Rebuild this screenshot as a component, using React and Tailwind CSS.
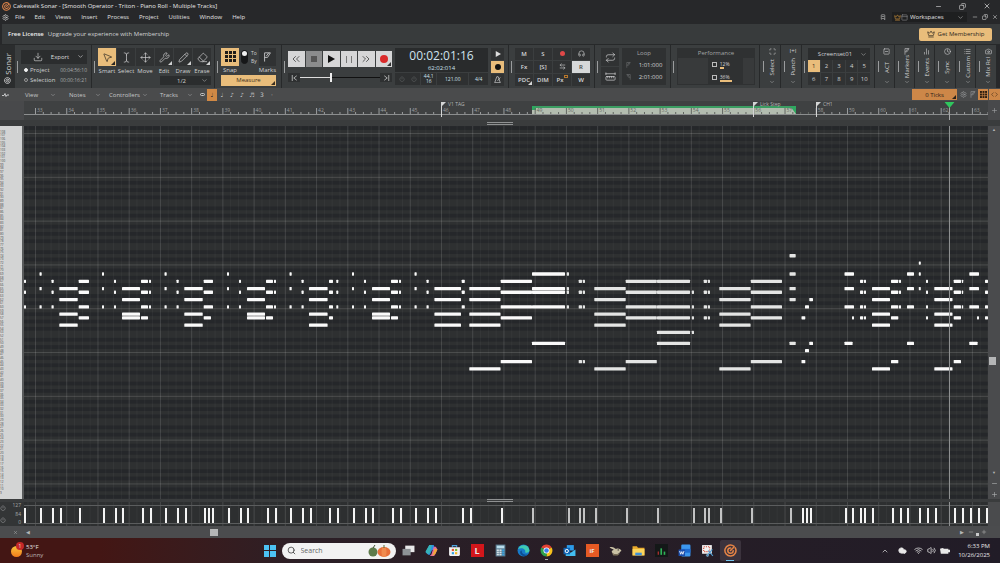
import React from 'react';
import {
  ArrowLeftRight, BookmarkMinus, Camera, ChartNoAxesColumn, ChevronDown, ChevronUp, ChevronsLeft, ChevronsRight, Clock, Cloud, Code,
  Copy, Crown, Download, Eraser, Headphones, List, Minus, MousePointer2, Move, PanelTop, Pencil, Plus, Power,
  Repeat, RulerDimensionLine, Scan, Search, Settings, SquareMinus, TextCursor, Volume2, Wifi, Wrench, X
} from 'lucide-react';

const MENUS = ['File', 'Edit', 'Views', 'Insert', 'Process', 'Project', 'Utilities', 'Window', 'Help'];

// y centre of each used row, keyed by midi note
const ROW = 3.65;
const START = 24;
const SPAN = 964;
const rowY = (midi) => 224.7 - (midi - 48) * ROW;
const pct = (x) => `${((x - START) / SPAN) * 100}%`;
const wide = (w) => `${(w / SPAN) * 100}%`;

const HIGH = [67, 64, 60];
const HIT = [69, 65, 60];
const CHORD = [65, 62, 58, 55];
const CHORD_ALT = [65, 62, 58, 57];
const CHORD_TOP = [67, 64, 60, 57];

// [start, end, notes]
const NOTES = [
  [24, 26, HIGH], [39.5, 41.7, HIT], [51.5, 53.7, HIGH], [59.3, 77.7, CHORD], [78.7, 89, CHORD_TOP],
  [102, 104, HIT], [114, 116, HIGH], [122, 140, CHORD_ALT], [141, 148, CHORD_TOP], [149, 151, HIGH],
  [164.5, 166.7, HIT], [176.5, 178.7, HIGH], [184.3, 202.7, CHORD], [203.7, 213, HIGH], [203.7, 211, [57]],
  [227, 229, HIT], [239, 241, HIGH], [247, 265, CHORD_ALT], [266, 273, CHORD_TOP], [274, 276, HIGH],
  [289.5, 291.7, HIT], [301.5, 303.7, HIGH], [309, 327.6, CHORD], [329, 333, CHORD_TOP], [336.3, 338.3, HIGH],
  [352, 354, HIT], [364, 366, HIGH], [372, 390, CHORD_ALT], [391, 398, CHORD_TOP], [399, 401, HIGH],
  [414.5, 416.7, HIT], [426.5, 428.7, HIGH], [434.4, 461, CHORD], [461.7, 464.8, HIGH],
  [469.3, 500.5, [...CHORD, 43]],
  [500.7, 532, [...CHORD_TOP, 45]],
  [532, 565, [69, 65, 64, 60, 50]], [566.8, 569, [69, 65, 64, 60]],
  [578.7, 582, [...HIGH, 45]], [582.8, 585, [...HIGH, 45]],
  [594.3, 625.7, [...CHORD, 43]],
  [625.7, 656.8, [...CHORD_TOP, 45]],
  [657, 690, [...CHORD_TOP, 53, 50]], [691.8, 694, [64, 60, 57, 53]],
  [703.7, 707, CHORD_TOP], [707.8, 710, CHORD_TOP],
  [719.3, 750.6, [...CHORD, 43]],
  [750.8, 782, [...CHORD_TOP, 45]],
  [789.5, 795.7, [74, 69, 65, 62, 50]],
  [801.5, 805.3, [57, 45]], [805, 809, [60, 48]], [809.3, 813, [62, 50]],
  [844.5, 854, HIT], [844.5, 852.6, [50]], [852, 854, [57]],
  [860, 863.2, CHORD_TOP], [864, 866, CHORD_TOP],
  [872, 890, [...CHORD, 43]], [891, 898.3, [...CHORD_TOP, 45]], [899, 901, HIGH],
  [907, 914, [...HIT, 50]], [918.8, 920.8, [72, 69, 65]], [926, 928, CHORD_TOP],
  [934.3, 952.5, [...CHORD, 43]], [953.7, 961, [...CHORD_TOP, 45]], [961.8, 963.2, HIGH],
  [969.3, 979, HIT], [969.3, 977.6, [50]], [977, 979, [57]],
  [985, 988, CHORD_TOP]
];

const VELOCITIES = [
  25, 41, 53, 61, 80, 104, 116, 123, 143, 151, 166, 178, 186, 205, 209, 213, 229, 241, 248, 268, 276, 291, 303, 311, 330, 338,
  354, 366, 373, 393, 401, 416, 428, 436, 463, 471, 502, 533, 569, 580, 584, 596, 627, 658, 694, 705, 709, 721, 752, 791, 803, 807,
  811, 846, 853, 861, 865, 873, 893, 901, 908, 920, 928, 936, 955, 963, 971, 979, 987
];

const MEASURES = Array.from({ length: 31 }, (_, i) => 33 + i);
const measureX = (n) => 35 + (n - 33) * 31.23;
const PLAYHEAD = 949.5;

const KEYS = Array.from({ length: 104 }, (_, i) => 110 - i);
const LABELLED_KEYS = KEYS.filter((k) => k <= 108 && k >= 9);
const isBlack = (midi) => [1, 3, 6, 8, 10].includes(midi % 12);

const Grip = () => <span className="w-px h-3 shrink-0 bg-[#9a9c9d]" />;

const Module = ({ className = '', children }) => (
  <section className={`flex items-center gap-[3px] pl-[2px] pr-1 bg-[#3b3e3f] border-r border-[#27292a] ${className}`}>
    <Grip />
    {children}
  </section>
);

const Picker = ({ label, value, className = '' }) => (
  <label className={`relative flex items-center bg-[#2b2d2e] ${className}`}>
    <select aria-label={label} className="w-full appearance-none bg-transparent outline-none pl-1 pr-3 [text-align-last:center]">
      <option>{value}</option>
    </select>
    <ChevronDown size={7} strokeWidth={1.5} className="absolute right-[3px] pointer-events-none" />
  </label>
);

const SonarLogo = ({ className }) => (
  <svg viewBox="0 0 24 24" className={className} fill="none" stroke="currentColor" strokeWidth="2.8" strokeLinecap="round">
    <path d="M18.500 4.200A10.200 10.200 0 1 0 20.800 7" />
    <path d="M12 12 18.500 5.500M12 7.200A5 5 0 1 0 17 12.500" />
  </svg>
);

const Flag = ({ className }) => (
  <svg viewBox="0 0 10 12" className={className} fill="none" stroke="currentColor">
    <path d="M1.5 11.500V1H8.500L5 6.500H1.500M3.500 5L6.500 1" />
  </svg>
);

const GridIcon = ({ className }) => (
  <svg viewBox="0 0 11 11" className={className} fill="currentColor">
    {[0, 1, 2].map((r) => [0, 1, 2].map((c) => <rect key={`${r}${c}`} x={c * 4} y={r * 4} width="3" height="3" />))}
  </svg>
);

const Corner = () => (
  <i className="absolute right-px bottom-px border-l-2 border-t-2 border-t-transparent border-l-transparent border-r-2 border-b-2 border-r-current border-b-current" />
);

const TitleBar = () => (
  <header className="flex items-center h-3 px-[2px] gap-[2px] text-[#e6e6e6]">
    <SonarLogo className="w-[9px] h-[9px] text-[#d9824a]" />
    <h1 className="flex-1">Cakewalk Sonar - [Smooth Operator - Triton - Piano Roll - Multiple Tracks]</h1>
    <div className="flex items-center gap-[17px] pr-[7px]">
      <button aria-label="Minimize"><Minus size={7} /></button>
      <button aria-label="Restore"><Copy size={7} className="-scale-x-100" /></button>
      <button aria-label="Close"><X size={8} /></button>
    </div>
  </header>
);

const MenuBar = () => (
  <div className="flex items-center h-3 pb-[2px] px-[2px] text-[#e0e0e0]">
    <Settings size={7} />
    <nav className="flex flex-1 gap-[10px] pl-[6px]">
      {MENUS.map((m) => <button key={m}>{m}</button>)}
    </nav>
    <BookmarkMinus size={6} className="mr-[6px]" />
    <div className="flex items-center w-[75px] h-[10px] pl-[2px] bg-[#1e1f20]">
      <Crown size={7} className="text-[#d99a3c]" />
      <PanelTop size={7} className="text-[#8a8c8d]" />
      <Picker label="Workspaces" value="Workspaces" className="flex-1 bg-transparent [&_select]:[text-align-last:left]! [&_select]:pl-[2px]!" />
    </div>
    <div className="flex items-center gap-1 pl-[5px]">
      <button aria-label="Minimize view"><Minus size={6} /></button>
      <button aria-label="Restore view"><Copy size={6} className="-scale-x-100" /></button>
      <button aria-label="Close view"><X size={6} /></button>
    </div>
  </div>
);

const MembershipBar = () => (
  <div className="flex items-center h-5 ml-[2px] pl-[6px] pr-2 bg-[#383b3c] text-[#d2d3d4]">
    <strong className="font-semibold text-[#f0f0f0] mr-1">Free License</strong>
    <span className="flex-1">Upgrade your experience with Membership</span>
    <button className="flex items-center justify-center gap-[3px] w-[73px] h-[13px] rounded-[2px] bg-[#e9bd7b] text-[#2c2620]">
      <Crown size={8} />Get Membership
    </button>
  </div>
);

const TOOLS = [
  { label: 'Smart', icon: MousePointer2, on: true },
  { label: 'Select', icon: TextCursor },
  { label: 'Move', icon: Move },
  { label: 'Edit', icon: Wrench },
  { label: 'Draw', icon: Pencil },
  { label: 'Erase', icon: Eraser }
];

const Tool = ({ tool }) => {
  const Icon = tool.icon;
  return (
    <button className="flex flex-col items-center gap-px w-[18px]">
      <span className={`relative flex items-center justify-center w-full h-[18px] ${tool.on ? 'bg-[#e9bd7b] text-[#2a2622]' : 'bg-[#303233] text-[#d0d1d2]'}`}>
        <Icon size={11} strokeWidth={1.5} />
        {tool.label !== 'Select' && tool.label !== 'Move' && <Corner />}
      </span>
      {tool.label}
    </button>
  );
};

const ExportModule = () => (
  <Module className="w-[77px]">
    <div className="flex flex-col flex-1 gap-[3px]">
      <button className="flex items-center justify-between h-[14px] pl-3 pr-[3px] bg-[#2b2d2e] text-[#dcdcdc]">
        <Download size={10} strokeWidth={1.5} />Export<ChevronDown size={7} />
      </button>
      {[['Project', '00:04:56:10'], ['Selection', '00:00:16:21']].map(([name, time], i) => (
        <label key={name} className="flex items-center gap-[2px] h-[7px] ml-[3px]">
          <input type="radio" name="range" defaultChecked={i === 0} className="appearance-none w-1 h-1 rounded-full border border-[#999] checked:border-[#eee] checked:bg-[#eee]" />
          <span className="flex-1">{name}</span>
          <span className="text-[5px] text-[#a8aaab]">{time}</span>
        </label>
      ))}
    </div>
  </Module>
);

const ToolsModule = () => (
  <Module className="w-[123px]">
    <div className="flex flex-col">
      <div className="flex gap-px">{TOOLS.map((t) => <Tool key={t.label} tool={t} />)}</div>
      <Picker label="Note duration" value="1/2" className="self-end w-[51px] h-[9px] mt-px" />
    </div>
  </Module>
);

const SnapModule = () => (
  <Module className="w-[67px]">
    <div className="flex flex-col gap-px">
      <div className="flex justify-between w-[55px]">
        <button className="flex flex-col items-center">
          <span className="flex items-center justify-center w-[18px] h-[18px] bg-[#e9bd7b] text-[#1f1c18]">
            <GridIcon className="w-[11px] h-[11px]" />
          </span>
          Snap
        </button>
        <div className="flex items-center gap-[3px] h-[18px]">
          <input type="checkbox" role="switch" aria-label="Snap to or by" className="appearance-none w-[7px] h-[14px] rounded-full bg-[#161718] border border-[#161718] before:block before:w-[5px] before:h-[5px] before:rounded-full before:bg-[#eee]" />
          <span className="flex flex-col text-[5px] leading-[8px]"><span>To</span><span>By</span></span>
        </div>
        <button className="flex flex-col items-center">
          <span className="flex items-center justify-center w-[17px] h-[18px] bg-[#303233]">
            <Flag className="w-[9px] h-[10px]" />
          </span>
          Marks
        </button>
      </div>
      <button className="relative h-[11px] bg-[#e9bd7b] text-[#3b2f20]">Measure<Corner /></button>
    </div>
  </Module>
);

const TRANSPORT = [
  { name: 'Rewind', art: <ChevronsLeft size={12} strokeWidth={1.5} /> },
  { name: 'Stop', art: <i className="w-[6px] h-[6px] bg-[#555]" />, dim: true },
  { name: 'Play', art: <svg viewBox="0 0 8 8" className="w-2 h-2"><path d="M1 0 8 4 1 8z" /></svg> },
  { name: 'Pause', art: <i className="w-[6px] h-[7px] border-x border-[#777]" /> },
  { name: 'Fast forward', art: <ChevronsRight size={12} strokeWidth={1.5} /> },
  { name: 'Record', art: <i className="w-2 h-2 rounded-full bg-[#da2a2a]" /> }
];

const EndStop = ({ flip }) => (
  <button aria-label={flip ? 'Go to end' : 'Go to start'} className="flex items-center justify-center w-3 h-[9px] bg-[#2e3031]">
    <svg viewBox="0 0 8 8" className={`w-[7px] h-[6px] ${flip ? 'rotate-180' : ''}`} fill="none" stroke="currentColor"><path d="M1 0v8M7 1 3 4l4 3" /></svg>
  </button>
);

const TransportModule = () => (
  <Module className="w-[227px]">
    <div className="flex flex-col gap-[6px] w-[104px]">
      <div className="grid grid-cols-6 gap-px">
        {TRANSPORT.map((b) => (
          <button key={b.name} aria-label={b.name} className={`relative flex items-center justify-center h-4 ${b.dim ? 'bg-[#8b8c8d]' : 'bg-[#d6d6d7]'} text-[#333] fill-[#111]`}>
            {b.art}{b.name === 'Record' && <Corner />}
          </button>
        ))}
      </div>
      <div className="flex items-center">
        <EndStop />
        <input
          type="range" aria-label="Position" defaultValue={39}
          className="flex-1 min-w-0 h-[9px] appearance-none bg-linear-to-r from-[#ddd] from-40% to-[#111] to-40% bg-size-[100%_1px] bg-no-repeat bg-center [&::-webkit-slider-thumb]:appearance-none [&::-webkit-slider-thumb]:w-[2px] [&::-webkit-slider-thumb]:h-[9px] [&::-webkit-slider-thumb]:bg-[#eee]"
        />
        <EndStop flip />
      </div>
    </div>
    <div className="flex flex-col flex-1 gap-px text-center text-[#cfe2ee]">
      <div className="flex flex-col justify-center h-6 bg-[#292b2c]">
        <output className="text-[12px] leading-[16px]">00:02:01:16</output>
        <output className="leading-[8px]">62:02:014</output>
      </div>
      <div className="flex gap-px h-3 text-[5px] *:flex *:items-center *:justify-center *:bg-[#2e3031]">
        <div className="flex-[26] gap-[6px] text-[#66696a]"><Power size={6} /><Power size={6} /></div>
        <div className="flex-[15] leading-[5px]">44.1<br />16</div>
        <div className="flex-[32]">121.00</div>
        <div className="flex-[19]">4/4</div>
      </div>
    </div>
    <div className="flex flex-col gap-px">
      <button aria-label="Audition" className="flex items-center justify-center w-[13px] h-3 bg-[#303233]">
        <svg viewBox="0 0 8 8" className="w-[6px] h-[6px] fill-[#ddd]"><path d="M1 0 8 4 1 8z" /></svg>
      </button>
      <button aria-label="Input echo" className="flex items-center justify-center w-[13px] h-3 bg-[#e9bd7b]"><i className="w-[6px] h-[6px] rounded-full bg-[#111]" /></button>
      <button aria-label="Metronome" className="flex items-center justify-center w-[13px] h-3 bg-[#303233]">
        <svg viewBox="0 0 10 10" className="w-[7px] h-[7px]" fill="none" stroke="currentColor"><path d="M1 9.500 4 1h2l3 8.500zM5 7l4-5" /></svg>
      </button>
    </div>
  </Module>
);

const MIX = [
  { name: 'Mute', art: 'M' },
  { name: 'Solo', art: 'S' },
  { name: 'Arm', art: <i className="w-[5px] h-[5px] rounded-full bg-[#e04848]" /> },
  { name: 'Listen', art: <Headphones size={7} /> },
  { name: 'Bypass effects', art: 'Fx' },
  { name: 'Dim solo', art: '[S]' },
  { name: 'Automation', art: <ArrowLeftRight size={7} /> },
  { name: 'Read', art: 'R', on: true },
  { name: 'Delay compensation', art: 'PDC' },
  { name: 'Dim', art: 'DIM' },
  { name: 'ProChannel', art: <>Px<i className="self-start w-1 h-[3px] mt-px border border-[#b9782c]" /></> },
  { name: 'Write', art: 'W' }
];

const MixModule = () => (
  <Module className="w-[86px]">
    <div className="grid grid-cols-4 gap-px flex-1">
      {MIX.map((b) => (
        <button key={b.name} aria-label={b.name} className={`relative flex items-center justify-center h-3 font-semibold ${b.on ? 'bg-[#d6d8d9] text-[#444]' : 'bg-[#303233] text-[#d6d7d8]'}`}>
          {b.art}{b.art === 'PDC' && <Corner />}
        </button>
      ))}
    </div>
  </Module>
);

const LoopModule = () => (
  <Module className="w-[76px]">
    <div className="flex flex-col gap-px">
      <button aria-label="Loop" className="flex items-center justify-center w-[18px] h-[18px] bg-[#303233]"><Repeat size={11} strokeWidth={1.5} /></button>
      <button aria-label="Set loop points" className="flex items-center justify-center w-[18px] h-[18px] bg-[#303233]"><RulerDimensionLine size={11} strokeWidth={1.5} /></button>
    </div>
    <div className="flex flex-col items-center flex-1 h-[37px] gap-1 pt-px bg-[#2f3132]">
      <span className="text-[#a3a5a6]">Loop</span>
      <span className="flex items-center gap-2 leading-[8px]"><Flag className="w-[5px] h-[6px] text-[#77797a]" />1:01:000</span>
      <span className="flex items-center gap-2 leading-[8px]"><Flag className="w-[5px] h-[6px] text-[#77797a] -scale-x-100" />2:01:000</span>
    </div>
  </Module>
);

const PerformanceModule = () => (
  <Module className="flex-1">
    <div className="flex flex-col flex-1 h-[37px] px-px bg-[#2f3132]">
      <span className="text-center text-[#a3a5a6] leading-[10px]">Performance</span>
      <div className="flex flex-1 gap-1 mb-px">
        <div className="flex-[28] bg-[#383a3b]" />
        <div className="flex flex-col justify-around flex-[26] text-[5px] leading-[6px]">
          {[[12, 'w-1'], [36, 'w-3']].map(([load, bar]) => (
            <div key={load} className="flex items-center gap-[3px]">
              <i className="w-[5px] h-[5px] border border-[#bbb]" />
              <span>{load}%<i className={`block h-[2px] bg-[#e9bd7b] ${bar}`} /></span>
            </div>
          ))}
        </div>
        <div className="flex-[10] bg-[#383a3b]" />
      </div>
    </div>
  </Module>
);

const SideModule = ({ label, children, className = 'w-[20px]' }) => (
  <button className={`relative flex flex-col items-center justify-between py-[3px] pl-1 bg-[#3b3e3f] border-r border-[#27292a] ${className}`}>
    <i className="absolute left-[3px] top-4 w-px h-[11px] bg-[#9a9c9d]" />
    {children}
    <span className="[writing-mode:vertical-rl] rotate-180">{label}</span>
    <ChevronDown size={6} strokeWidth={1.5} />
  </button>
);

const ScreensetModule = () => (
  <Module className="w-[73px]">
    <div className="flex flex-col flex-1">
      <Picker label="Screenset" value="Screenset01" className="h-3" />
      <div className="grid grid-cols-5 gap-px">
        {Array.from({ length: 10 }, (_, i) => (
          <button key={i} className={`h-3 ${i === 0 ? 'bg-[#e9bd7b] text-[#332a1d]' : 'bg-[#303233]'}`}>{i + 1}</button>
        ))}
      </div>
    </div>
  </Module>
);

const Toolbar = () => (
  <div className="flex h-11 border-t border-[#27292a] text-[#d0d1d2]">
    <div className="flex flex-col items-center justify-end gap-[2px] w-[15px] pb-1 bg-[#2b2d2e]">
      <span className="[writing-mode:vertical-rl] rotate-180 text-[8px] leading-[10px]">Sonar</span>
      <SonarLogo className="w-[7px] h-[7px]" />
    </div>
    <ExportModule />
    <ToolsModule />
    <SnapModule />
    <TransportModule />
    <MixModule />
    <LoopModule />
    <PerformanceModule />
    <SideModule label="Select" className="w-[21px]"><Scan size={7} /></SideModule>
    <SideModule label="Punch" className="w-[21px]"><span className="leading-[7px]">I+I</span></SideModule>
    <ScreensetModule />
    <SideModule label="ACT"><SquareMinus size={7} /></SideModule>
    <SideModule label="Markers"><Flag className="w-[6px] h-[7px]" /></SideModule>
    <SideModule label="Events"><ChartNoAxesColumn size={7} /></SideModule>
    <SideModule label="Sync" className="w-[21px]"><Clock size={7} /></SideModule>
    <SideModule label="Custom"><List size={7} /></SideModule>
    <SideModule label="Mix Rcl" className="w-[21px]"><Camera size={7} /></SideModule>
    <div className="w-[3px]" />
  </div>
);

const VIEW_MENUS = [
  { name: 'View', size: 'w-[31px] mr-[13px]' },
  { name: 'Notes', size: 'w-8 mr-2' },
  { name: 'Controllers', size: 'w-[39px] mr-3' },
  { name: 'Tracks', size: 'w-[33px] mr-1' }
];

const ViewBar = () => (
  <div className="flex items-center h-[13px] bg-[#4a4b4c] text-[#c6c7c8]">
    <svg viewBox="0 0 14 8" className="w-[7px] h-1 ml-[2px] mr-4" fill="none" stroke="currentColor" strokeWidth="2"><path d="M0 5h4l2-4 2 6 2-3h4" /></svg>
    <div className="flex">
      {VIEW_MENUS.map((m) => (
        <button key={m.name} className={`flex items-center justify-between ${m.size}`}>
          {m.name}<ChevronDown size={6} strokeWidth={1.5} />
        </button>
      ))}
    </div>
    <div className="flex items-center font-['DejaVu_Sans',sans-serif] *:w-[10px] *:h-3">
      {['o', '♩', '♩', '♪', '♪', '♬', '3', '·'].map((n, i) => (
        <button key={i} aria-label={`Duration ${i + 1}`} className={`flex items-center justify-center ${i === 1 ? 'bg-[#d08945] text-[#222]' : ''}`}>
          {i === 0 ? <i className="w-[5px] h-[3px] border border-current rounded-full" /> : n}
        </button>
      ))}
    </div>
    <div className="flex-1" />
    <button className="relative w-[45px] h-[11px] bg-[#cd8748] text-[#2a2119]">0 Ticks<Corner /></button>
    <div className="flex items-center gap-[3px] pl-[3px] pr-[2px] text-[#9b9d9e]">
      <Settings size={7} />
      <Flag className="w-[6px] h-[7px]" />
    </div>
    <button aria-label="Grid" className="flex items-center justify-center w-[10px] h-[11px] bg-[#cd8748] text-[#2a1c10]"><GridIcon className="w-[7px] h-[7px]" /></button>
    <button aria-label="Snap edges" className="flex items-center justify-center w-[11px] h-[11px] ml-px bg-[#cd8748] text-[#4a3018]"><Code size={7} /></button>
  </div>
);

const Ruler = () => (
  <div className="flex h-[19px] bg-[#48494b]">
    <div className="w-6" />
    <svg className="flex-1 h-full bg-[#3f4142] overflow-hidden" aria-label="Time ruler">
      <rect x={pct(532)} y="5" width={wide(264)} height="8" fill="#b3bdb0" />
      <rect x={pct(532)} y="5" width={wide(264)} height="2" fill="#3b9d62" />
      <rect x={pct(532)} y="5" width={wide(4)} height="4" fill="#2fa860" />
      <svg x={pct(790)} y="5" width="6" height="8"><path d="M0 0H6V8z" fill="#2fa860" /></svg>
      <rect x="0" y="13" width="100%" height="1" fill="#8c8e8f" />
      {MEASURES.map((n) => {
        const inLoop = n >= 49 && n < 58;
        const x = measureX(n);
        return (
          <g key={n} fill={inLoop ? '#626762' : '#9b9d9e'}>
            <rect x={pct(x)} y="7" width="1" height="6" />
            {[1, 2, 3].map((b) => <rect key={b} x={pct(x + b * 7.8)} y="11" width="1" height="2" />)}
            <text x={pct(x + 2)} y="11" fontSize="5">{n}</text>
          </g>
        );
      })}
      {[[441, 'V1 TAG'], [753, 'Lick Step'], [816, 'CH1']].map(([x, name]) => (
        <g key={name} fill="#d4d5d5">
          <rect x={pct(x)} y="1" width="1" height="15" />
          <svg x={pct(x)} y="1" width="5" height="5"><path d="M0 0H5L0 5z" /></svg>
          <text x={pct(x + 7)} y="5" fontSize="5" fill="#b4b6b6">{name}</text>
        </g>
      ))}
      <rect x={pct(PLAYHEAD - 0.5)} y="5" width="1" height="14" fill="#a5a7a8" />
      <svg x={pct(PLAYHEAD - 5)} y="1" width="10" height="6"><path d="M0 0H10L5 6z" fill="#2fc65e" /></svg>
    </svg>
    <button aria-label="Add track row" className="flex items-center justify-center w-3 text-[#a0a2a3]"><Plus size={7} /></button>
  </div>
);

const GridLines = () => (
  <g>
    {MEASURES.map((n) => [0, 1, 2, 3].map((b) => (
      <rect key={`${n}${b}`} x={pct(measureX(n) + b * 7.8)} y="0" width="1" height="100%" fill="#fff" opacity={b === 0 ? 0.13 : 0.04} />
    )))}
    <rect x={pct(27.5)} y="0" width="1" height="100%" fill="#fff" opacity="0.04" />
  </g>
);

const Splitter = ({ className }) => (
  <div className={`flex items-center justify-center bg-[#3a3c3d] ${className}`}>
    <i className="w-[26px] h-[3px] border-y border-[#8f9192]" />
  </div>
);

const PianoRoll = () => (
  <div className="flex flex-1 min-h-0 bg-[#4a4b4d]">
    <svg className="w-[22px] h-full bg-[#d3d4d4]" aria-label="Keyboard">
      {LABELLED_KEYS.map((k) => <text key={k} x="0" y={rowY(k) + 1} fontSize="3" fill="#444">{k}</text>)}
    </svg>
    <div className="w-[2px] bg-[#595b5c]" />
    <svg className="flex-1 h-full bg-[#2e3031]" aria-label="Notes">
      {KEYS.filter(isBlack).map((k) => (
        <rect key={k} x="0" y={rowY(k) - ROW / 2} width="100%" height={ROW} fill="#25272a" />
      ))}
      {KEYS.filter((k) => k % 12 === 0).map((k) => (
        <rect key={k} x="0" y={rowY(k) + ROW / 2 - 0.5} width="100%" height="1" fill="#4b4d4d" />
      ))}
      <GridLines />
      {NOTES.map(([from, to, keys]) => keys.map((k) => (
        <rect key={`${from}-${k}`} x={pct(from)} y={rowY(k) - 1.7} width={wide(to - from)} height="3.3" rx="0.6" fill={from > 560 && from < 800 ? '#e4e5e4' : '#fafafa'} />
      )))}
      <rect x={pct(PLAYHEAD - 0.5)} y="0" width="1" height="100%" fill="#8e9091" />
    </svg>
    <div className="flex flex-col items-center w-3 py-px text-[#b4b6b7]">
      <button aria-label="Scroll up" className="text-[4px] leading-[6px]">▲</button>
      <div className="flex-[68]" />
      <button aria-label="Vertical scroll thumb" className="w-[7px] h-2 mr-[3px] bg-[#b5b6b7]" />
      <div className="flex-[32]" />
      <button aria-label="Scroll down" className="text-[4px] leading-[6px]">▼</button>
      <button aria-label="Zoom out" className="mt-1"><Minus size={7} /></button>
      <button aria-label="Zoom in" className="mt-1"><Plus size={7} /></button>
    </div>
  </div>
);

const VelocityLane = () => (
  <div className="flex h-6 bg-[#4a4b4d]">
    <div className="flex justify-between w-6 pr-[3px] bg-[#333536] text-[#a5a7a8] text-[5px]">
      <div className="flex flex-col justify-around"><Power size={6} /><Power size={6} /></div>
      <div className="flex flex-col justify-between text-right leading-[7px]"><span>127</span><span>84</span><span>0</span></div>
    </div>
    <svg className="flex-1 h-full bg-[#2d2f30]" aria-label="Velocity">
      <GridLines />
      <rect x="0" y="3" width="100%" height="1" fill="#5b5d5e" />
      <rect x="0" y="21" width="100%" height="1" fill="#5b5d5e" />
      {VELOCITIES.map((x) => (
        <rect key={x} x={pct(x - 1)} y="6" width="2" height="15" fill={x > 520 && x < 800 ? '#c2c3c3' : '#f4f4f4'} />
      ))}
      <rect x={pct(PLAYHEAD - 0.5)} y="0" width="1" height="100%" fill="#8e9091" />
    </svg>
    <div className="w-3" />
  </div>
);

const ScrollRow = () => (
  <div className="flex items-center h-3 bg-[#4b4c4e] text-[#b4b6b7]">
    <div className="flex justify-end w-6 pr-[6px]"><X size={5} /></div>
    <button aria-label="Scroll left" className="text-[5px] ml-[2px]">◀</button>
    <div className="flex-[180]" />
    <button aria-label="Horizontal scroll thumb" className="w-2 h-[7px] bg-[#b5b6b7]" />
    <div className="flex-[740]" />
    <button aria-label="Scroll right" className="text-[5px]">▶</button>
    <button aria-label="Narrower" className="ml-1"><Minus size={6} /></button>
    <i className="w-[3px] h-[3px] mx-[2px] mt-1 bg-[#c9caca]" />
    <button aria-label="Wider" className="mr-[13px]"><Plus size={6} /></button>
  </div>
);

const APPS = [
  { name: 'Task View', art: <><rect x="6" y="3" width="17" height="12" fill="#e9e9ea" /><rect x="1" y="9" width="15" height="12" fill="#8e9296" /></> },
  { name: 'Copilot', art: (
    <>
      <path d="M8 2h8l3 8-6 1-4 9H6L1 15z" fill="#2f8fe0" />
      <path d="M8 2h5l-5 16H4L1 14z" fill="#36b3b8" />
      <path d="M16 5h4l3 5-6 12H9l3-3z" fill="#e067a5" />
      <path d="M18 8l5 2-4 9-6 3z" fill="#f2a73c" />
    </>
  ) },
  { name: 'Microsoft Store', art: (
    <>
      <path d="M8 6V3h8v3" fill="none" stroke="#4da3dd" strokeWidth="2" />
      <path d="M2 6h20v14a2 2 0 0 1-2 2H4a2 2 0 0 1-2-2z" fill="#f1f1f1" />
      <path d="M7 9h4v4H7z" fill="#e5522c" /><path d="M13 9h4v4h-4z" fill="#7cb82f" /><path d="M7 15h4v4H7z" fill="#2a9fe0" /><path d="M13 15h4v4h-4z" fill="#f4b824" />
    </>
  ) },
  { name: 'L', tile: 'bg-[#d3161b]', text: 'L' },
  { name: 'Calculator', art: (
    <>
      <rect x="3" y="1" width="18" height="22" fill="#58788c" /><rect x="5" y="3" width="14" height="5" fill="#b9dcec" />
      {[0, 1, 2].map((r) => [0, 1, 2].map((c) => <rect key={`${r}${c}`} x={5 + c * 5} y={10 + r * 4} width="4" height="3" fill={c === 2 ? '#3aa2e0' : '#d6e2e9'} />))}
    </>
  ) },
  { name: 'Edge', art: (
    <>
      <circle cx="12" cy="12" r="11" fill="#1679c8" />
      <path d="M2 9a11 11 0 0 1 21 3c0 4-6 5-8 3 2-5-5-9-13-6z" fill="#3fc9b0" />
      <path d="M9 12c-1 6 5 9 11 7-4 5-12 4-14-2-1-3 1-5 3-5z" fill="#0d4f94" />
    </>
  ) },
  { name: 'Chrome', open: true, art: (
    <>
      <path d="M12 12 2.500 6.500A11 11 0 0 1 21.500 6.500z" fill="#e34133" /><path d="M12 12 21.500 6.500A11 11 0 0 1 12 23z" fill="#f8c21c" /><path d="M12 12v11A11 11 0 0 1 2.500 6.500z" fill="#2da14c" />
      <circle cx="12" cy="12" r="5.500" fill="#fff" /><circle cx="12" cy="12" r="4.200" fill="#3b7ded" />
    </>
  ) },
  { name: 'Outlook', art: (
    <>
      <path d="M7 2h13v10H7z" fill="#2c9be8" /><path d="M5 10l9 6 9-6v12H5z" fill="#43bdf0" /><rect x="1" y="7" width="12" height="12" fill="#1063b3" />
      <circle cx="7" cy="13" r="3" fill="none" stroke="#fff" strokeWidth="1.800" />
    </>
  ) },
  { name: 'iF', tile: 'bg-[#e55a24]', size: 'text-[6px]', text: 'iF' },
  { name: 'Bird', art: (
    <>
      <path d="M1 6c7-2 9 2 12 3 4-2 9 0 10 4-3 0-3 6-10 6-6 0-8-3-8-6 2-2 3-2 4-2C7 9 4 9 1 6z" fill="#c9c1a4" /><path d="M5 16c5 4 10 3 16 1l-5 4H8z" fill="#857a60" /><circle cx="17" cy="11" r="1.200" fill="#222" />
    </>
  ) },
  { name: 'File Explorer', art: (
    <><path d="M1 4h8l2 3h12v14H1z" fill="#e9a92b" /><path d="M1 9h22v12H1z" fill="#fbd45c" /><path d="M6 16h12v5H6z" fill="#3e8fd8" /></>
  ) },
  { name: 'Levels', art: (
    <><rect width="24" height="24" fill="#141818" /><path d="M5 14h2v6H5z" fill="#c33" /><path d="M10 8h3v12h-3z" fill="#2fb457" /><path d="M16 14h3v6h-3z" fill="#2fb457" /></>
  ) },
  { name: 'Word', art: (
    <><rect x="6" y="1" width="17" height="22" rx="2" fill="#3c97ee" /><path d="M6 9h17v7H6z" fill="#1d6ad0" /><rect x="1" y="10" width="12" height="12" rx="1" fill="#1a4fae" /><path d="M3 13l2 6 2-5 2 5 2-6" stroke="#fff" strokeWidth="1.500" fill="none" /></>
  ) },
  { name: 'Snipping Tool', art: (
    <><rect x="2" y="2" width="18" height="16" fill="#f1f1f1" /><rect x="5" y="5" width="11" height="9" fill="none" stroke="#d0432f" strokeWidth="2" strokeDasharray="2 2" /><path d="M11 22 21 10M22 22 13 12" stroke="#4b9bd3" strokeWidth="2" /><circle cx="12" cy="21" r="2" fill="none" stroke="#8ab6d6" strokeWidth="1.500" /></>
  ) }
];

const Taskbar = () => (
  <footer className="flex items-center h-[25px] bg-linear-to-r from-[#431614] from-10% via-[#2c1f26] via-30% to-[#211c27] text-[#e8e8e8]">
    <div className="flex flex-1 items-center gap-1 pl-[10px]">
      <span className="relative w-3 h-3">
        <i className="absolute left-[1px] top-[1px] w-[11px] h-[11px] rounded-full bg-linear-to-b from-[#f8c33c] to-[#ef7a1a]" />
        <b className="absolute left-[6px] -top-[3px] w-[8px] h-[8px] rounded-full bg-[#c62828] text-[5px] leading-[8px] text-center font-normal">1</b>
      </span>
      <p className="leading-[8px]">53°F<br /><span className="text-[#b9b3b4]">Sunny</span></p>
    </div>
    <div className="flex items-center gap-[6px] pl-1">
      <button aria-label="Start" className="grid grid-cols-2 gap-px w-3 h-3 *:bg-[#4cc2f3]"><i /><i /><i /><i /></button>
      <label className="flex items-center gap-[5px] w-[114px] h-4 px-[5px] rounded-full bg-[#f2f2f2] text-[#333]">
        <Search size={9} />
        <input type="search" placeholder="Search" aria-label="Search" className="flex-1 min-w-0 text-[7px] outline-none placeholder:text-[#666]" />
        <svg viewBox="0 0 24 12" className="w-6 h-3">
          <circle cx="6" cy="7" r="4.500" fill="#5d7a4a" /><path d="M6 3 8 0" stroke="#3c4e30" /><ellipse cx="17" cy="7" rx="6.500" ry="5" fill="#e8703a" /><ellipse cx="17" cy="7" rx="2.500" ry="5" fill="#f08b4f" /><path d="M17 3V0" stroke="#5a6b35" />
        </svg>
      </label>
      <div className="flex items-center gap-[10px]">
        {APPS.map((app) => (
          <button key={app.name} aria-label={app.name} className={`relative flex items-center justify-center w-[13px] h-[13px] leading-none font-bold ${app.size || 'text-[9px]'} ${app.tile || ''}`}>
            {app.text || <svg viewBox="0 0 24 24" className="w-full h-full">{app.art}</svg>}
            {app.open && <i className="absolute -bottom-[3px] w-[3px] h-px bg-[#aaa]" />}
          </button>
        ))}
      </div>
      <button aria-label="Sonar" className="relative flex items-center justify-center w-[21px] h-[21px] rounded-[2px] bg-[#3b333d]">
        <SonarLogo className="w-[13px] h-[13px] text-[#e58446]" />
        <i className="absolute bottom-0 w-2 h-px bg-[#76c5ee]" />
      </button>
    </div>
    <div className="flex flex-1 items-center justify-end pr-[10px]">
      <ChevronUp size={8} className="mr-[9px]" />
      <Cloud size={9} className="mr-[7px] fill-current" />
      <Wifi size={9} className="mr-1" />
      <Volume2 size={9} className="mr-1" />
      <svg viewBox="0 0 12 8" className="w-[10px] h-[7px] mr-2 fill-current"><path d="M0 2l3-1 2 1h5v1h2v3h-2v2H1z" /></svg>
      <time className="text-right leading-[9px]">6:33 PM<br />10/26/2025</time>
    </div>
  </footer>
);

const App = () => (
  <div className="flex flex-col h-screen overflow-hidden bg-[#27282a] font-['Open_Sans','Noto_Sans',sans-serif] text-[6px] leading-[8px] whitespace-nowrap">
    <TitleBar />
    <MenuBar />
    <MembershipBar />
    <Toolbar />
    <ViewBar />
    <Ruler />
    <Splitter className="h-[6px]" />
    <PianoRoll />
    <Splitter className="h-[3px]" />
    <VelocityLane />
    <ScrollRow />
    <Taskbar />
  </div>
);

export default App;
